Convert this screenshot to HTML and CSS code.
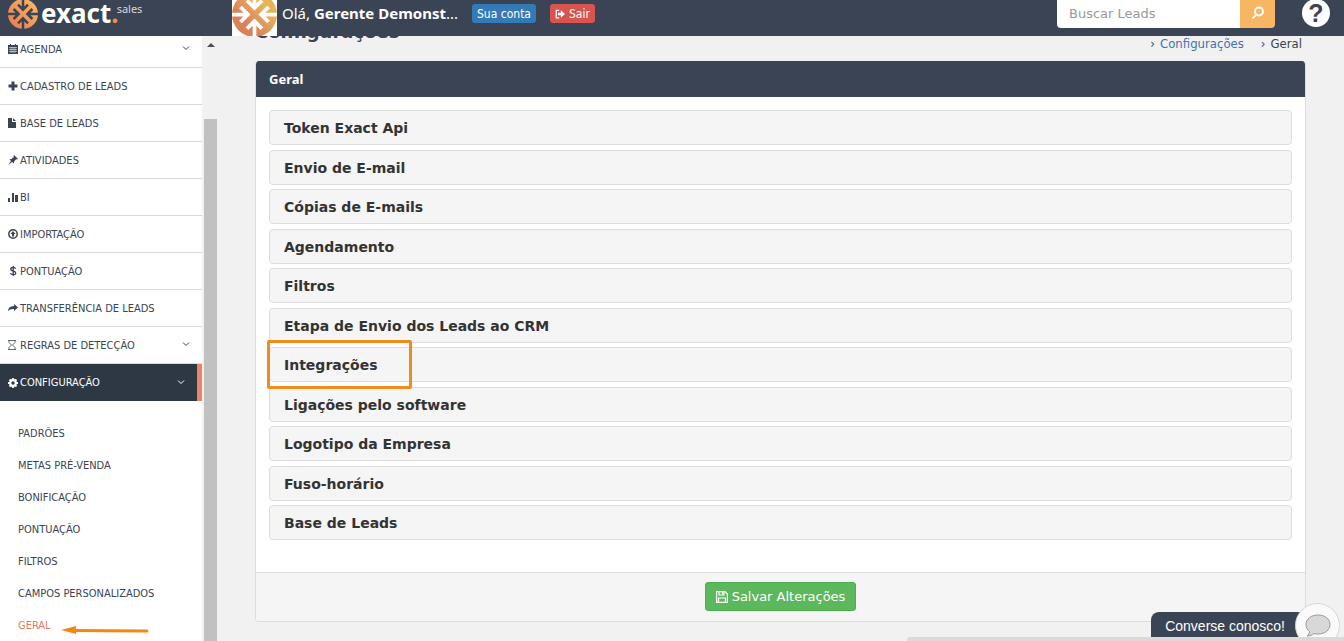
FILE: index.html
```html
<!DOCTYPE html>
<html lang="pt-BR">
<head>
    <meta charset="UTF-8">
    <meta name="viewport" content="width=device-width, initial-scale=1">
    <title>Configurações - Geral</title>
    <link rel="stylesheet" href="styles.css">
</head>
<body>
    <!-- Shared symbols -->
    <svg class="symbols" aria-hidden="true">
        <defs>
            <linearGradient id="orange" x1="0" y1="1" x2="1" y2="0">
                <stop offset="0" stop-color="#ec7450"/>
                <stop offset="1" stop-color="#f9c062"/>
            </linearGradient>
            <linearGradient id="copper" x1="0" y1="1" x2="1" y2="0">
                <stop offset=".3" stop-color="#d9815a"/>
                <stop offset=".7" stop-color="#e6b45c"/>
            </linearGradient>
        </defs>
        <symbol id="chevron" viewBox="0 0 8 8">
            <path d="M1 1.500 4 4.500 7 1.500" fill="none" stroke="currentColor"/>
        </symbol>
        <symbol id="arrows" viewBox="0 0 48 48">
            <g fill="none" stroke="currentColor" stroke-width="4">
                <path d="M24 0V17M16 9l8 8 8-8"/>
                <path d="M24 48V31M16 39l8-8 8 8"/>
                <path d="M0 24H17M9 16l8 8-8 8"/>
                <path d="M48 24H31M39 16l-8 8 8 8"/>
            </g>
        </symbol>
    </svg>

    <header class="topbar">
        <a class="logo" href="#">
            <svg class="logo-icon" viewBox="0 0 48 48" aria-hidden="true">
                <circle cx="24" cy="24" r="24" fill="url(#orange)"/>
                <use href="#arrows"/>
            </svg>
            <span class="logo-name">exact<span class="logo-dot">.</span></span>
            <span class="logo-sub">sales</span>
        </a>
        <div class="user">
            <svg class="avatar" viewBox="0 0 48 48" aria-hidden="true">
                <rect width="48" height="48" fill="#fff"/>
                <circle cx="24" cy="24" r="24" fill="url(#copper)"/>
                <use href="#arrows" color="#fff"/>
            </svg>
            <span class="user-name">Olá, <strong>Gerente Demonst</strong>...</span>
            <button type="button" class="btn btn-account">Sua conta</button>
            <button type="button" class="btn btn-exit">
                <svg width="10" height="10" viewBox="0 0 12 12" aria-hidden="true"><path d="M5 1.500H1.500v9H5" fill="none" stroke="#fff" stroke-width="1.500"/><path d="M3.500 4.500h3.500V1.500L12 6 7 10.500V7.500H3.500z" fill="#fff"/></svg>
                Sair
            </button>
        </div>
        <form class="search">
            <input type="text" placeholder="Buscar Leads" aria-label="Buscar Leads">
            <button type="submit" aria-label="Buscar">
                <svg width="14" height="14" viewBox="0 0 14 14" aria-hidden="true"><circle cx="8" cy="5.500" r="4" fill="none" stroke="#fff" stroke-width="2"/><path d="M5 9 1.500 12.500" stroke="#fff" stroke-width="2"/></svg>
            </button>
        </form>
        <a class="help" href="#" aria-label="Ajuda">?</a>
    </header>

    <div class="layout">
        <nav class="sidebar">
            <ul class="menu">
                <li><a href="#">
                    <svg class="icon" viewBox="0 0 10 10"><path d="M0 1h2V0h1v1h4V0h1v1h2v9H0z" fill="currentColor"/><path d="M1 3.500h8M1 5.500h8M1 7.500h8M3 3v6M5 3v6M7 3v6" stroke="#fff" stroke-width=".5"/></svg>
                    AGENDA <svg class="chevron"><use href="#chevron"/></svg></a></li>
                <li><a href="#">
                    <svg class="icon" viewBox="0 0 10 10"><path d="M5 .5v9M.5 5h9" stroke="currentColor" stroke-width="3"/></svg>
                    CADASTRO DE LEADS</a></li>
                <li><a href="#">
                    <svg class="icon" viewBox="0 0 10 10"><path d="M0 0h4v4h4v6H0zM5 0l3 3H5z" fill="currentColor"/></svg>
                    BASE DE LEADS</a></li>
                <li><a href="#">
                    <svg class="icon" viewBox="0 0 10 10"><path d="M6 0l4 4-1 .5-.8-.2L6 6.500 6 8.500 4 7 0 10 3 6 1.500 4.200 3.600 4 6 1.800 5.500 1z" fill="currentColor"/></svg>
                    ATIVIDADES</a></li>
                <li><a href="#">
                    <svg class="icon" viewBox="0 0 10 10"><path d="M0 6h2v4H0zM4 1h2v9H4zM7 3h3v7H7z" fill="currentColor"/></svg>
                    BI</a></li>
                <li><a href="#">
                    <svg class="icon" viewBox="0 0 10 10"><circle cx="5" cy="5" r="4.200" fill="none" stroke="currentColor" stroke-width="1.500"/><path d="M5 2l2.500 3H6v2.500H4V5H2.500z" fill="currentColor"/></svg>
                    IMPORTAÇÃO</a></li>
                <li><a href="#">
                    <svg class="icon" viewBox="0 0 10 10"><path d="M7.700 2.800Q7 1.400 5 1.400 2.800 1.400 2.800 3T5.200 5 7.700 7 5.300 8.600Q3 8.600 2.300 7.200M5.200 0v10" fill="none" stroke="currentColor" stroke-width="1.300"/></svg>
                    PONTUAÇÃO</a></li>
                <li><a href="#">
                    <svg class="icon" viewBox="0 0 10 10"><path d="M6 1l4 3.500L6 8V6Q2 5.500 0 8 0 3.500 6 3z" fill="currentColor"/></svg>
                    TRANSFERÊNCIA DE LEADS</a></li>
                <li><a href="#">
                    <svg class="icon" viewBox="0 0 10 10"><path d="M0 .5h8M0 9.500h8M1 .5v2L3.500 5 1 7.500v2M7 .5v2L4.500 5 7 7.500v2" fill="none" stroke="currentColor" stroke-width=".8"/></svg>
                    REGRAS DE DETECÇÃO <svg class="chevron"><use href="#chevron"/></svg></a></li>
                <li class="active"><a href="#">
                    <svg class="icon" viewBox="0 0 10 10"><circle cx="5" cy="5" r="2.800" fill="none" stroke="currentColor" stroke-width="2.200"/><path d="M5 0v2M5 8v2M0 5h2M8 5h2M1.500 1.500l1.200 1.200M7.300 7.300l1.200 1.200M8.500 1.500 7.300 2.700M2.700 7.300 1.500 8.500" stroke="currentColor" stroke-width="1.800"/></svg>
                    CONFIGURAÇÃO <svg class="chevron"><use href="#chevron"/></svg></a></li>
            </ul>
            <ul class="submenu">
                <li><a href="#">PADRÕES</a></li>
                <li><a href="#">METAS PRÉ-VENDA</a></li>
                <li><a href="#">BONIFICAÇÃO</a></li>
                <li><a href="#">PONTUAÇÃO</a></li>
                <li><a href="#">FILTROS</a></li>
                <li><a href="#">CAMPOS PERSONALIZADOS</a></li>
                <li class="current"><a href="#">GERAL</a>
                    <svg class="pointer" viewBox="0 0 88 10" aria-hidden="true"><path d="M12 5.500 86 6" stroke="#f5870f" stroke-width="3" stroke-linecap="round"/><path d="M0 5 15 1v8z" fill="#f5870f"/></svg>
                </li>
            </ul>
        </nav>
        <div class="scrollbar" aria-hidden="true">
            <span class="scroll-up"></span>
            <span class="scroll-thumb"></span>
        </div>

        <main class="content">
            <div class="page-head">
                <h1>Configurações</h1>
                <ol class="breadcrumb">
                    <li><a href="#">Configurações</a></li>
                    <li>Geral</li>
                </ol>
            </div>
            <section class="panel">
                <h2 class="panel-heading">Geral</h2>
                <div class="panel-body">
                    <button type="button" class="item">Token Exact Api</button>
                    <button type="button" class="item">Envio de E-mail</button>
                    <button type="button" class="item">Cópias de E-mails</button>
                    <button type="button" class="item">Agendamento</button>
                    <button type="button" class="item">Filtros</button>
                    <button type="button" class="item">Etapa de Envio dos Leads ao CRM</button>
                    <button type="button" class="item highlight">Integrações</button>
                    <button type="button" class="item">Ligações pelo software</button>
                    <button type="button" class="item">Logotipo da Empresa</button>
                    <button type="button" class="item">Fuso-horário</button>
                    <button type="button" class="item">Base de Leads</button>
                </div>
                <div class="panel-footer">
                    <button type="button" class="save">
                        <svg width="12" height="12" viewBox="0 0 12 12" aria-hidden="true"><path d="M.6.6H9L11.400 3v8.400H.6zM3 .6v3.400h5V.6M2.500 11.400V7h7v4.400M6.500 1v2" fill="none" stroke="#fff" stroke-width="1.200"/></svg>
                        Salvar Alterações
                    </button>
                </div>
            </section>
        </main>
    </div>

    <!-- Chat -->
    <div class="chat">
        <button type="button" class="chat-label">Converse conosco!</button>
        <span class="chat-bubble">
            <svg width="26" height="24" viewBox="0 0 26 24" aria-hidden="true"><path d="M13 1C6 1 1 5 1 10.500c0 3 1.500 5.500 3.500 7 0 2-1 3.500-2.500 4.500 3 0 5.500-1 7-2.500 1 .3 2.500.5 4 .5 7 0 12-4 12-9.500S20 1 13 1z" fill="#d8d8d8" stroke="#999"/></svg>
        </span>
    </div>
    <div class="status-strip"></div>
</body>
</html>
```

FILE: styles.css
```css
/* General */
*, *::before, *::after {
  box-sizing: border-box;
}

body {
  margin: 0;
  height: 100vh;
  display: flex;
  flex-direction: column;
  overflow: hidden;
  background: #f1f1f1;
  color: #3a4454;
  font-family: "DejaVu Sans Condensed", "DejaVu Sans", sans-serif;
  font-size: 13px;
}

ul, ol {
  list-style: none;
  margin: 0;
  padding: 0;
}

a {
  color: inherit;
  text-decoration: none;
}

button, input {
  font: inherit;
}

button {
  cursor: pointer;
}

.symbols {
  position: absolute;
  width: 0;
  height: 0;
}

/* Top bar */
.topbar {
  flex: none;
  display: flex;
  height: 36px;
  padding-right: 14px;
  overflow: hidden;
  background: #3a4454;
  color: #fff;
}

.logo {
  display: flex;
  width: 232px;
  padding-left: 8px;
}

.logo-icon {
  width: 30px;
  height: 30px;
  margin-top: -1px;
  color: #3a4454;
}

.logo-name {
  margin-left: 3px;
  font: bold 26px/26px "Noto Sans", sans-serif;
}

.logo-dot {
  color: #f08c50;
}

.logo-sub {
  margin-left: -2px;
  font: 11px/18px "Noto Sans", sans-serif;
  color: #d5d8dd;
}

.user {
  display: flex;
  align-items: flex-start;
}

.avatar {
  width: 45px;
  height: 45px;
  margin-top: -8px;
}

.user-name {
  margin: 0 14px 0 5px;
  font: 15px/26px "Noto Sans", sans-serif;
}

.btn {
  display: flex;
  align-items: center;
  gap: 4px;
  height: 19px;
  margin: 4px 14px 0 0;
  padding: 0 5px;
  border: 0;
  border-radius: 3px;
  font-size: 12px;
  color: #fff;
}

.btn-account {
  background: #337ab7;
}

.btn-exit {
  background: #d9534f;
}

.search {
  display: flex;
  height: 34px;
  margin: -6px 27px 0 auto;
}

.search input {
  width: 183px;
  padding: 4px 12px 0;
  border: 0;
  border-radius: 4px 0 0 4px;
  font-family: "DejaVu Sans", sans-serif;
  background: #fff;
}

.search input::placeholder {
  color: #999;
  opacity: 1;
}

.search button {
  width: 35px;
  padding: 6px 0 0;
  border: 0;
  border-radius: 0 4px 4px 0;
  background: #f8b562;
}

.help {
  width: 28px;
  height: 28px;
  margin-top: -1px;
  border-radius: 50%;
  background: #fff;
  color: #3a4454;
  font: bold 25px/28px "Liberation Sans", sans-serif;
  text-align: center;
}

/* Sidebar */
.layout {
  flex: 1;
  display: flex;
  min-height: 0;
}

.sidebar {
  width: 202px;
  overflow: hidden;
  background: #fff;
  font-size: 11px;
}

.menu {
  margin-top: -5px;
}

.menu a {
  display: flex;
  align-items: center;
  gap: 2px;
  height: 37px;
  padding: 0 12px 0 8px;
  border-bottom: 1px solid #d9d9d9;
}

.menu .active a {
  border-right: 5px solid #ee8465;
  border-bottom: 0;
  background: #2d3844;
  color: #fff;
}

.icon {
  flex: none;
  width: 10px;
  height: 10px;
}

.chevron {
  width: 8px;
  height: 8px;
  margin-left: auto;
}

.submenu {
  padding: 16px 0 0 18px;
}

.submenu li {
  display: flex;
  align-items: center;
  gap: 10px;
  height: 32px;
}

.current {
  color: #e57864;
}

.pointer {
  width: 88px;
  height: 10px;
  margin-top: 9px;
}

/* Sidebar scrollbar */
.scrollbar {
  display: flex;
  flex-direction: column;
  align-items: center;
  width: 17px;
}

.scroll-up {
  margin: 7px 0 72px;
  border: 4px solid transparent;
  border-top: 0;
  border-bottom-color: #505050;
}

.scroll-thumb {
  flex: 1;
  width: 13px;
  background: #c1c1c1;
}

/* Content */
.content {
  flex: 1;
  padding: 0 38px 0 36px;
  overflow: hidden;
}

.page-head {
  display: flex;
  justify-content: space-between;
  height: 25px;
}

.page-head h1 {
  margin: -16px 0 0;
  font: bold 18px/24px "DejaVu Sans", sans-serif;
}

.breadcrumb {
  display: flex;
  gap: 17px;
  padding-right: 4px;
  line-height: 16px;
}

.breadcrumb li::before {
  content: "›";
  margin-right: 5px;
}

.breadcrumb a {
  color: #3f72ad;
}

.panel {
  border: 1px solid #ddd;
  border-top: 0;
  border-radius: 4px;
  background: #fff;
  overflow: hidden;
}

.panel-heading {
  margin: 0 -1px;
  padding: 0 14px;
  background: #3a4454;
  color: #fff;
  font: bold 13px/36px "Noto Sans", sans-serif;
}

.panel-body {
  display: flex;
  flex-direction: column;
  justify-content: space-between;
  height: 475px;
  padding: 13px 13px 32px;
}

.item {
  position: relative;
  height: 35px;
  padding: 1px 14px 0;
  border: 1px solid #ddd;
  border-radius: 4px;
  background: #f5f5f5;
  color: #333;
  font: bold 14px/20px "DejaVu Sans", sans-serif;
  text-align: left;
}

.highlight::after {
  content: "";
  position: absolute;
  z-index: 1;
  top: -8px;
  left: -3px;
  width: 145px;
  height: 49px;
  border: 3px solid #ee8c1e;
  border-radius: 2px;
}

.panel-footer {
  display: flex;
  justify-content: center;
  padding: 9px 0 10px;
  border-top: 1px solid #ddd;
  background: #f5f5f5;
}

.save {
  display: flex;
  align-items: center;
  gap: 4px;
  height: 29px;
  padding: 0 10px;
  border: 1px solid #4cae4c;
  border-radius: 3px;
  background: #5cb85c;
  color: #fff;
  font-family: "DejaVu Sans", sans-serif;
}

/* Chat */
.chat {
  position: fixed;
  right: 4px;
  bottom: 0;
  display: flex;
  align-items: flex-start;
}

.chat-label {
  height: 29px;
  margin: 9px -10px 0 0;
  padding: 0 20px 0 14px;
  border: 0;
  border-radius: 8px 0 0 0;
  background: #3a4454;
  color: #fff;
  font: 14px/29px "Liberation Sans", sans-serif;
}

.chat-bubble {
  display: flex;
  align-items: center;
  justify-content: center;
  width: 45px;
  height: 45px;
  margin-bottom: -7px;
  border: 1px solid #d5d5d5;
  border-radius: 50%;
  background: #fafafa;
}

.status-strip {
  position: fixed;
  right: 0;
  bottom: 0;
  left: 907px;
  height: 4px;
  border-radius: 3px 0 0 0;
  background: #dadada;
}
```
